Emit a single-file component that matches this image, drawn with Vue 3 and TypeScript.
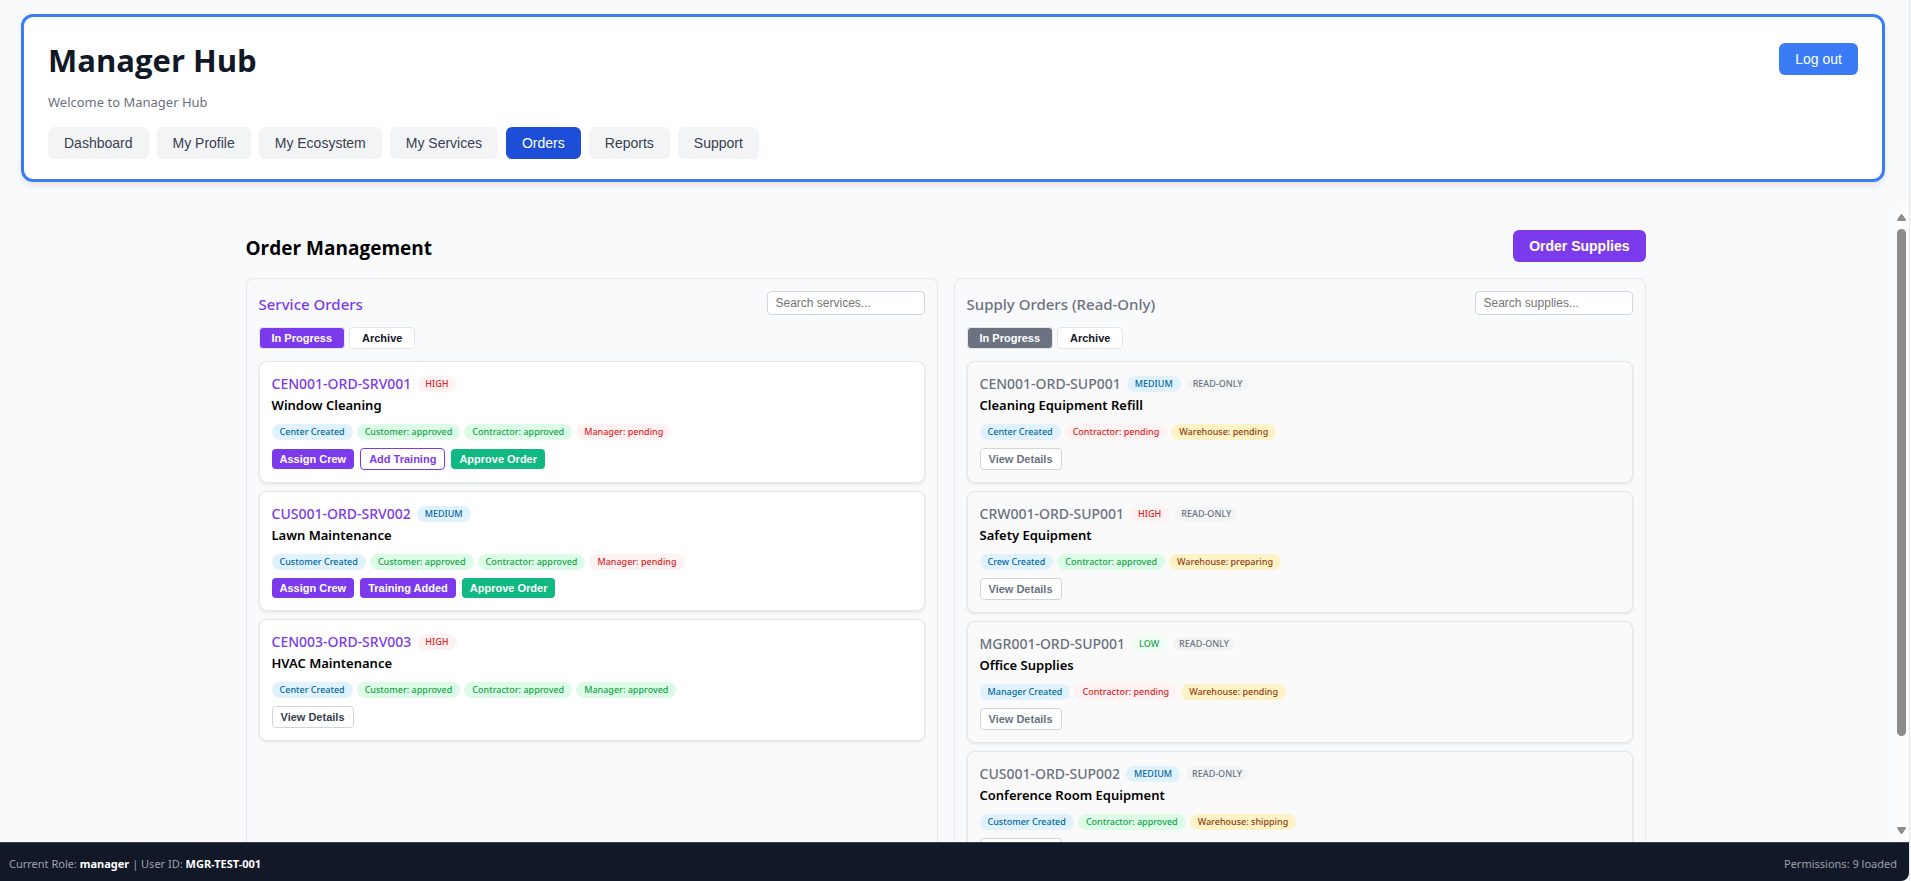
<script setup lang="ts">
import { computed, ref } from 'vue'

type Tone = 'info' | 'ok' | 'alert' | 'warn'
type Priority = 'HIGH' | 'MEDIUM' | 'LOW'
type ActionKind = 'solid' | 'outline' | 'approve' | 'plain'
type View = 'progress' | 'archive'

interface Pill {
  text: string
  tone: Tone
}

interface Action {
  text: string
  kind: ActionKind
}

interface Order {
  id: string
  title: string
  priority: Priority
  pills: Pill[]
  actions: Action[]
}

const tabs = ['Dashboard', 'My Profile', 'My Ecosystem', 'My Services', 'Orders', 'Reports', 'Support']
const activeTab = ref('Orders')

const priorityTone: Record<Priority, string> = { HIGH: 'alert', MEDIUM: 'info', LOW: 'low' }

const details: Action[] = [{ text: 'View Details', kind: 'plain' }]

const serviceOrders: Order[] = [
  {
    id: 'CEN001-ORD-SRV001',
    title: 'Window Cleaning',
    priority: 'HIGH',
    pills: [
      { text: 'Center Created', tone: 'info' },
      { text: 'Customer: approved', tone: 'ok' },
      { text: 'Contractor: approved', tone: 'ok' },
      { text: 'Manager: pending', tone: 'alert' },
    ],
    actions: [
      { text: 'Assign Crew', kind: 'solid' },
      { text: 'Add Training', kind: 'outline' },
      { text: 'Approve Order', kind: 'approve' },
    ],
  },
  {
    id: 'CUS001-ORD-SRV002',
    title: 'Lawn Maintenance',
    priority: 'MEDIUM',
    pills: [
      { text: 'Customer Created', tone: 'info' },
      { text: 'Customer: approved', tone: 'ok' },
      { text: 'Contractor: approved', tone: 'ok' },
      { text: 'Manager: pending', tone: 'alert' },
    ],
    actions: [
      { text: 'Assign Crew', kind: 'solid' },
      { text: 'Training Added', kind: 'solid' },
      { text: 'Approve Order', kind: 'approve' },
    ],
  },
  {
    id: 'CEN003-ORD-SRV003',
    title: 'HVAC Maintenance',
    priority: 'HIGH',
    pills: [
      { text: 'Center Created', tone: 'info' },
      { text: 'Customer: approved', tone: 'ok' },
      { text: 'Contractor: approved', tone: 'ok' },
      { text: 'Manager: approved', tone: 'ok' },
    ],
    actions: details,
  },
]

const supplyOrders: Order[] = [
  {
    id: 'CEN001-ORD-SUP001',
    title: 'Cleaning Equipment Refill',
    priority: 'MEDIUM',
    pills: [
      { text: 'Center Created', tone: 'info' },
      { text: 'Contractor: pending', tone: 'alert' },
      { text: 'Warehouse: pending', tone: 'warn' },
    ],
    actions: details,
  },
  {
    id: 'CRW001-ORD-SUP001',
    title: 'Safety Equipment',
    priority: 'HIGH',
    pills: [
      { text: 'Crew Created', tone: 'info' },
      { text: 'Contractor: approved', tone: 'ok' },
      { text: 'Warehouse: preparing', tone: 'warn' },
    ],
    actions: details,
  },
  {
    id: 'MGR001-ORD-SUP001',
    title: 'Office Supplies',
    priority: 'LOW',
    pills: [
      { text: 'Manager Created', tone: 'info' },
      { text: 'Contractor: pending', tone: 'alert' },
      { text: 'Warehouse: pending', tone: 'warn' },
    ],
    actions: details,
  },
  {
    id: 'CUS001-ORD-SUP002',
    title: 'Conference Room Equipment',
    priority: 'MEDIUM',
    pills: [
      { text: 'Customer Created', tone: 'info' },
      { text: 'Contractor: approved', tone: 'ok' },
      { text: 'Warehouse: shipping', tone: 'warn' },
    ],
    actions: details,
  },
]

const serviceView = ref<View>('progress')
const supplyView = ref<View>('progress')
const serviceQuery = ref('')
const supplyQuery = ref('')

function matching(orders: Order[], query: string, view: View): Order[] {
  if (view === 'archive') return []
  const q = query.trim().toLowerCase()
  return orders.filter((o) => (o.id + ' ' + o.title).toLowerCase().includes(q))
}

const shownServices = computed(() => matching(serviceOrders, serviceQuery.value, serviceView.value))
const shownSupplies = computed(() => matching(supplyOrders, supplyQuery.value, supplyView.value))
</script>

<template>
  <div class="page">
    <header class="hub">
      <div class="hub-text">
        <h1>Manager Hub</h1>
        <p>Welcome to Manager Hub</p>
        <nav class="tabs" aria-label="Hub sections">
          <button
            v-for="tab in tabs"
            :key="tab"
            type="button"
            class="tab"
            :class="{ active: tab === activeTab }"
            @click="activeTab = tab"
          >{{ tab }}</button>
        </nav>
      </div>
      <button type="button" class="logout">Log out</button>
    </header>

    <div class="body">
      <main class="scroller">
        <div class="content">
          <div class="title-row">
            <h2>Order Management</h2>
            <button type="button" class="order-supplies">Order Supplies</button>
          </div>

          <div class="columns">
            <section class="panel service">
              <div class="panel-head">
                <h3>Service Orders</h3>
                <input v-model="serviceQuery" type="text" placeholder="Search services..." aria-label="Search services" />
              </div>
              <div class="views">
                <button type="button" class="view" :class="{ active: serviceView === 'progress' }" @click="serviceView = 'progress'">In Progress</button>
                <button type="button" class="view" :class="{ active: serviceView === 'archive' }" @click="serviceView = 'archive'">Archive</button>
              </div>
              <div class="cards">
                <article v-for="order in shownServices" :key="order.id" class="card">
                  <div class="card-head">
                    <span class="order-id">{{ order.id }}</span>
                    <span class="pill" :class="priorityTone[order.priority]">{{ order.priority }}</span>
                  </div>
                  <h4>{{ order.title }}</h4>
                  <div class="pills">
                    <span v-for="pill in order.pills" :key="pill.text" class="pill" :class="pill.tone">{{ pill.text }}</span>
                  </div>
                  <div class="actions">
                    <button v-for="action in order.actions" :key="action.text" type="button" class="action" :class="action.kind">{{ action.text }}</button>
                  </div>
                </article>
              </div>
            </section>

            <section class="panel supply">
              <div class="panel-head">
                <h3>Supply Orders (Read-Only)</h3>
                <input v-model="supplyQuery" type="text" placeholder="Search supplies..." aria-label="Search supplies" />
              </div>
              <div class="views">
                <button type="button" class="view" :class="{ active: supplyView === 'progress' }" @click="supplyView = 'progress'">In Progress</button>
                <button type="button" class="view" :class="{ active: supplyView === 'archive' }" @click="supplyView = 'archive'">Archive</button>
              </div>
              <div class="cards">
                <article v-for="order in shownSupplies" :key="order.id" class="card">
                  <div class="card-head">
                    <span class="order-id">{{ order.id }}</span>
                    <span class="pill" :class="priorityTone[order.priority]">{{ order.priority }}</span>
                    <span class="read-only">READ-ONLY</span>
                  </div>
                  <h4>{{ order.title }}</h4>
                  <div class="pills">
                    <span v-for="pill in order.pills" :key="pill.text" class="pill" :class="pill.tone">{{ pill.text }}</span>
                  </div>
                  <div class="actions">
                    <button v-for="action in order.actions" :key="action.text" type="button" class="action" :class="action.kind">{{ action.text }}</button>
                  </div>
                </article>
              </div>
            </section>
          </div>
        </div>
      </main>
      <div class="scrollbar" aria-hidden="true">
        <svg width="9" height="7" viewBox="0 0 9 7"><path d="M3.7 0.6Q4.5 -0.4 5.3 0.6L8.8 5.6Q9.2 7 8 7H1Q-0.2 7 0.2 5.6Z" fill="#8b8b8b" /></svg>
        <div class="track"><div class="thumb"></div></div>
        <svg width="9" height="7" viewBox="0 0 9 7"><path d="M3.7 6.4Q4.5 7.4 5.3 6.4L8.8 1.4Q9.2 0 8 0H1Q-0.2 0 0.2 1.4Z" fill="#8b8b8b" /></svg>
      </div>
    </div>

    <footer class="status">
      <span>Current Role: <strong>manager</strong> | User ID: <strong>MGR-TEST-001</strong></span>
      <span>Permissions: 9 loaded</span>
    </footer>
  </div>
</template>

<style>
body {
  margin: 0;
  background: #fbfbfb;
}
</style>

<style scoped>
* {
  box-sizing: border-box;
}

h1,
h2,
h3,
h4,
p {
  margin: 0;
}

button,
input {
  margin: 0;
  font-family: Arial, 'Liberation Sans', sans-serif;
}

button {
  border: 0;
  cursor: pointer;
}

.page {
  display: flex;
  flex-direction: column;
  height: 100vh;
  margin-right: 1px;
  border-right: 1px solid #e5e7eb;
  background: #f9fafb;
  color: #000;
  font-family: 'Segoe UI', 'Noto Sans', 'Open Sans', sans-serif;
  overflow: hidden;
}

.hub {
  display: flex;
  justify-content: space-between;
  align-items: flex-start;
  margin: 14px 24px 24px 21px;
  padding: 20px 24px;
  border: 3px solid #3b7cf6;
  border-radius: 12px;
  background: #fff;
  box-shadow: 0 4px 6px rgba(0, 0, 0, 0.08);
}

h1 {
  color: #111827;
  font-family: 'Segoe UI', 'Open Sans', sans-serif;
  font-size: 31px;
  line-height: 46px;
  font-weight: 700;
}

.hub p {
  margin-top: 8px;
  color: #6b7280;
  font-size: 13px;
  line-height: 22px;
}

.tabs {
  display: flex;
  gap: 8px;
  margin-top: 14px;
}

.tab,
.logout,
.order-supplies {
  padding: 8px 16px;
  border-radius: 6px;
  font-size: 14px;
  line-height: 16px;
}

.tab {
  background: #f3f4f6;
  color: #374151;
}

.tab.active {
  background: #1d4ed8;
  color: #fff;
}

.logout {
  margin-top: 6px;
  background: #3b7cf6;
  color: #fff;
}

.body {
  display: flex;
  flex: 1;
  min-height: 0;
}

.scroller {
  flex: 1;
  min-width: 0;
  padding: 24px 27px 24px 24px;
  overflow-y: auto;
  scrollbar-width: none;
}

.content {
  max-width: 1400px;
  margin: 0 auto;
}

.title-row {
  display: flex;
  justify-content: space-between;
  align-items: flex-end;
  margin-bottom: 16px;
}

h2 {
  font-family: 'Segoe UI', 'Open Sans', sans-serif;
  font-size: 19px;
  line-height: 28px;
  font-weight: 700;
}

.order-supplies {
  background: #7c3aed;
  color: #fff;
  font-weight: 700;
}

.columns {
  display: grid;
  grid-template-columns: 1fr 1fr;
  gap: 16px;
}

.panel {
  min-width: 0;
  padding: 12px 12px 36px;
  border: 1px solid #e5e7eb;
  border-radius: 8px;
}

.panel-head {
  display: flex;
  justify-content: space-between;
  align-items: flex-start;
  gap: 12px;
}

h3 {
  font-size: 15px;
  line-height: 26px;
  font-weight: 500;
}

.service h3,
.service .order-id {
  color: #7c3aed;
}

.supply h3,
.supply .order-id {
  color: #6b7280;
}

input {
  width: 158px;
  height: 24px;
  padding: 4px 8px;
  border: 1px solid #d1d5db;
  border-radius: 4px;
  background: #fff;
  font-size: 12px;
  line-height: 14px;
}

input::placeholder {
  color: #757575;
  opacity: 1;
}

.views {
  display: flex;
  gap: 4px;
  margin: 10px 0 12px;
}

.view {
  padding: 4px 12px;
  border: 1px solid #e5e7eb;
  border-radius: 4px;
  background: #fff;
  color: #111827;
  font-size: 11px;
  line-height: 12px;
  font-weight: 700;
}

.view.active {
  color: #fff;
}

.service .view.active {
  background: #7c3aed;
}

.supply .view.active {
  background: #6b7280;
}

.cards {
  display: flex;
  flex-direction: column;
  gap: 8px;
}

.card {
  padding: 12px;
  border: 1px solid #e5e7eb;
  border-radius: 8px;
  background: #fff;
  box-shadow: 0 1px 3px rgba(0, 0, 0, 0.1);
}

.supply .card {
  background: #fafafa;
}

.card-head {
  display: flex;
  align-items: center;
  gap: 6px;
}

.order-id {
  font-size: 14px;
  line-height: 20px;
  font-weight: 500;
}

h4 {
  font-size: 13px;
  line-height: 22px;
  font-weight: 600;
}

.pills {
  display: flex;
  flex-wrap: wrap;
  gap: 4px;
  margin: 8px 0;
}

.pill {
  padding: 2px 8px;
  border-radius: 8px;
  font-size: 9px;
  line-height: 12px;
  font-weight: 500;
}

.info {
  background: #e0f2fe;
  color: #0369a1;
}

.ok {
  background: #dcfce7;
  color: #16a34a;
}

.alert {
  background: #fef2f2;
  color: #dc2626;
}

.warn {
  background: #fef3c7;
  color: #92400e;
}

.low {
  background: #f0fdf4;
  color: #16a34a;
}

.read-only {
  padding: 1px 6px;
  border-radius: 8px;
  background: #f3f4f6;
  color: #6b7280;
  font-size: 9px;
  line-height: 12px;
  font-weight: 500;
}

.actions {
  display: flex;
  align-items: center;
  gap: 6px;
}

.action {
  padding: 4px 8px;
  border-radius: 4px;
  font-size: 11px;
  line-height: 12px;
  font-weight: 700;
}

.solid {
  background: #7c3aed;
  color: #fff;
}

.outline {
  border: 1px solid #7c3aed;
  background: #fff;
  color: #7c3aed;
}

.approve {
  background: #10b981;
  color: #fff;
}

.plain {
  border: 1px solid #d1d5db;
  background: #fff;
  color: #374151;
}

.supply .plain {
  color: #6b7280;
}

.scrollbar {
  display: flex;
  flex-direction: column;
  align-items: center;
  width: 15px;
  padding: 8px 0;
  background: #fcfcfc;
}

.track {
  flex: 1;
  width: 9px;
  margin: 8px 0;
}

.thumb {
  height: 86%;
  border-radius: 5px;
  background: #8b8b8b;
}

.status {
  display: flex;
  justify-content: space-between;
  align-items: center;
  padding: 12px 12px 8px 9px;
  border-top: 1px solid #374151;
  border-bottom-right-radius: 8px;
  background: #111827;
  color: #9ca3af;
  font-size: 11px;
  line-height: 18px;
}

.status strong {
  color: #fff;
  font-weight: 700;
}
</style>
